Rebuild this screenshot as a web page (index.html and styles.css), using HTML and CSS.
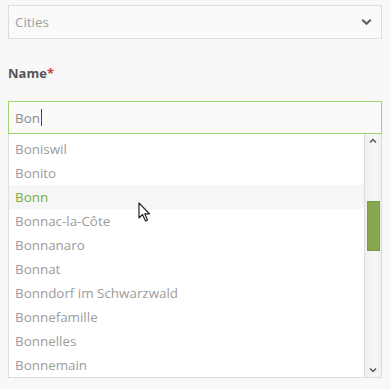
FILE: index.html
```html
<!DOCTYPE html>
<html lang="en">
<head>
    <meta charset="UTF-8">
    <meta name="viewport" content="width=device-width, initial-scale=1.0">
    <title>City picker</title>
    <link rel="stylesheet" href="styles.css">
</head>
<body>

    <!-- Category select -->
    <div class="select">
        <span class="select-text">Cities</span>
        <svg class="chevron" width="11" height="8" viewBox="0 0 11 8">
            <path d="M1.2 1.8 L5.5 5.8 L9.8 1.8" fill="none" stroke="#5a6270" stroke-width="2.2"/>
        </svg>
    </div>

    <label class="field-label">Name<span class="required">*</span></label>

    <div class="input">Bon<span class="caret"></span></div>

    <!-- Autocomplete list -->
    <div class="suggestions">
        <ul class="items">
            <li>Boniswil</li>
            <li>Bonito</li>
            <li class="active">Bonn</li>
            <li>Bonnac-la-Côte</li>
            <li>Bonnanaro</li>
            <li>Bonnat</li>
            <li>Bonndorf im Schwarzwald</li>
            <li>Bonnefamille</li>
            <li>Bonnelles</li>
            <li>Bonnemain</li>
        </ul>
        <div class="scrollbar">
            <svg class="arrow" width="16" height="14" viewBox="0 0 16 14">
                <path d="M5 8.5 L8 5.5 L11 8.5" fill="none" stroke="#555" stroke-width="1.5"/>
            </svg>
            <div class="track">
                <div class="thumb"></div>
            </div>
            <svg class="arrow" width="16" height="14" viewBox="0 0 16 14">
                <path d="M5 5.5 L8 8.5 L11 5.5" fill="none" stroke="#555" stroke-width="1.5"/>
            </svg>
        </div>

        <!-- mouse pointer -->
        <svg class="pointer" width="14" height="21" viewBox="0 0 14 21">
            <path d="M1 1 L1 16 L4.5 12.5 L7.5 19 L9.5 18 L6.8 11.8 L11.5 11.8 Z" fill="#fff" stroke="#222" stroke-width="1.2" stroke-linejoin="round"/>
        </svg>
    </div>

</body>
</html>
```

FILE: styles.css
```css
body {
    margin: 0;
    padding: 5px 9px 0 8px;
    background-color: #f8f8f8;
    font-family: "Open Sans", Arial, sans-serif;
    font-size: 13.4px;
    color: #999;
}
.select {
    height: 34px;
    box-sizing: border-box;
    border: 1px solid #ddd;
    background-color: #fafafa;
    display: flex;
    align-items: center;
    justify-content: space-between;
    padding: 0 9px 0 6px;
}
.select-text {
    color: #a0a0a0;
}
.field-label {
    display: block;
    margin-top: 25px;
    font-size: 13px;
    font-weight: bold;
    color: #555;
    line-height: 18px;
}
.required {
    color: #d9383a;
}
.input {
    margin-top: 19px;
    height: 33px;
    box-sizing: border-box;
    border: 1px solid #a0d46c;
    background-color: #fafafa;
    padding: 0 6px;
    display: flex;
    align-items: center;
    color: #8c8c8c;
}
.caret {
    display: inline-block;
    width: 1px;
    height: 17px;
    background-color: #444;
    margin-left: 1px;
}
.suggestions {
    position: relative;
    height: 244px;
    box-sizing: border-box;
    border: 1px solid #ddd;
    border-top: none;
    display: flex;
    background-color: #fff;
}
.items {
    flex: 1;
    list-style: none;
    margin: 0;
    padding: 3px 0 0 0;
    overflow: hidden;
}
.items li {
    height: 24px;
    line-height: 24px;
    padding-left: 6px;
    color: #9c9c9c;
}
.items li.active {
    background-color: #f6f6f6;
    color: #78b043;
}
.scrollbar {
    width: 16px;
    border-left: 1px solid #ddd;
    background: linear-gradient(to right, #f0f0f0, #f7f7f7 60%, #f0f0f0);
    display: flex;
    flex-direction: column;
}
.arrow {
    display: block;
}
.track {
    flex: 1;
    padding: 53px 1px 0 2px;
}
.thumb {
    height: 48px;
    background-color: #87a84f;
    border: 1px solid #7d9c49;
}
.pointer {
    position: absolute;
    left: 129px;
    top: 68px;
}
```
